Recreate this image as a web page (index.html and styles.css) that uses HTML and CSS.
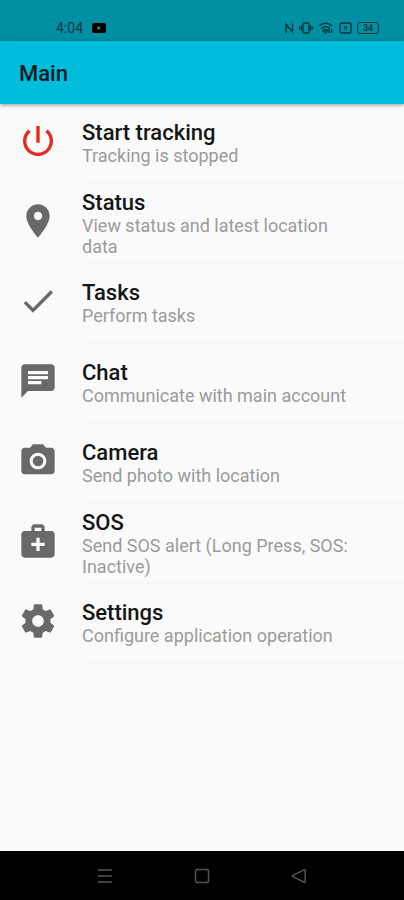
FILE: index.html
```html
<!DOCTYPE html>
<html lang="en">
<head>
    <meta charset="UTF-8">
    <meta name="viewport" content="width=device-width, initial-scale=1.0">
    <title>Main</title>
    <link rel="stylesheet" href="styles.css">
</head>
<body>
    <div class="status-bar">
        <div class="status-left">
            <span>4:04</span>
            <svg width="14" height="10" viewBox="0 0 14 10">
                <rect width="14" height="10" rx="2" fill="#000"/>
                <path d="M5.5 3v4L9 5z" fill="#4b8f8c"/>
            </svg>
        </div>
        <div class="status-right">
            <!-- NFC -->
            <svg width="9" height="12" viewBox="0 0 9 12">
                <path d="M1 11V2l6.500 8V1.500M1 3l3 3.500"/>
            </svg>
            <!-- Vibrate -->
            <svg width="14" height="12" viewBox="0 0 14 12">
                <rect x="4" y="1" width="6" height="10" rx="1"/>
                <path d="M2.500 3v6M11.500 3v6M.7 4.500v3M13.300 4.500v3"/>
            </svg>
            <!-- Wi-Fi -->
            <svg width="16" height="12" viewBox="0 0 16 12">
                <path d="M1 4c4-3.500 9-3.500 13 0M3 6.500c3-2.500 6-2.500 9 0M5 8.500c1.500-1.300 3-1.300 4.500 0L7.500 11zM11 7v4M13.500 7v4"/>
            </svg>
            <!-- SIM -->
            <svg width="13" height="12" viewBox="0 0 13 12">
                <rect x="1" y="1" width="11" height="10" rx="2"/>
                <path d="M5 4.500l3 3M8 4.500l-3 3"/>
            </svg>
            <div class="battery">34</div>
        </div>
    </div>

    <header class="app-bar">
        <h1>Main</h1>
    </header>

    <main>
        <ul class="menu">
            <li>
                <button class="menu-item">
                    <svg class="icon power" viewBox="0 0 24 24"><path d="M13 3h-2v10h2V3zm4.830 2.170l-1.420 1.420C17.990 7.860 19 9.810 19 12c0 3.870-3.130 7-7 7s-7-3.130-7-7c0-2.190 1.010-4.140 2.580-5.420L6.170 5.170C4.230 6.820 3 9.260 3 12c0 4.970 4.030 9 9 9s9-4.030 9-9c0-2.740-1.230-5.180-3.170-6.830z"/></svg>
                    <span class="text">
                        <span class="title">Start tracking</span>
                        <span class="summary">Tracking is stopped</span>
                    </span>
                </button>
            </li>
            <li>
                <button class="menu-item">
                    <svg class="icon" viewBox="0 0 24 24"><path d="M12 2C8.130 2 5 5.130 5 9c0 5.250 7 13 7 13s7-7.750 7-13c0-3.870-3.130-7-7-7zm0 9.500c-1.380 0-2.500-1.120-2.500-2.500s1.120-2.500 2.500-2.500 2.500 1.120 2.500 2.500-1.120 2.500-2.500 2.500z"/></svg>
                    <span class="text">
                        <span class="title">Status</span>
                        <span class="summary">View status and latest location data</span>
                    </span>
                </button>
            </li>
            <li>
                <button class="menu-item">
                    <svg class="icon" viewBox="0 0 24 24"><path d="M9 16.170L4.830 12l-1.420 1.410L9 19 21 7l-1.410-1.410z"/></svg>
                    <span class="text">
                        <span class="title">Tasks</span>
                        <span class="summary">Perform tasks</span>
                    </span>
                </button>
            </li>
            <li>
                <button class="menu-item">
                    <svg class="icon" viewBox="0 0 24 24"><path d="M20 2H4c-1.100 0-1.990.9-1.990 2L2 22l4-4h14c1.100 0 2-.9 2-2V4c0-1.100-.9-2-2-2zM6 9h12v2H6V9zm8 5H6v-2h8v2zm4-6H6V6h12v2z"/></svg>
                    <span class="text">
                        <span class="title">Chat</span>
                        <span class="summary">Communicate with main account</span>
                    </span>
                </button>
            </li>
            <li>
                <button class="menu-item">
                    <svg class="icon" viewBox="0 0 24 24"><circle cx="12" cy="12" r="3.200"/><path d="M9 2L7.170 4H4c-1.100 0-2 .9-2 2v12c0 1.100.9 2 2 2h16c1.100 0 2-.9 2-2V6c0-1.100-.9-2-2-2h-3.170L15 2H9zm3 15c-2.760 0-5-2.240-5-5s2.240-5 5-5 5 2.240 5 5-2.240 5-5 5z"/></svg>
                    <span class="text">
                        <span class="title">Camera</span>
                        <span class="summary">Send photo with location</span>
                    </span>
                </button>
            </li>
            <li>
                <button class="menu-item">
                    <svg class="icon" viewBox="0 0 24 24"><path d="M20 6h-4V4c0-1.100-.9-2-2-2h-4c-1.100 0-2 .9-2 2v2H4c-1.100 0-2 .9-2 2v12c0 1.100.9 2 2 2h16c1.100 0 2-.9 2-2V8c0-1.100-.9-2-2-2zM10 4h4v2h-4V4zm6 11h-3v3h-2v-3H8v-2h3v-3h2v3h3v2z"/></svg>
                    <span class="text">
                        <span class="title">SOS</span>
                        <span class="summary">Send SOS alert (Long Press, SOS: Inactive)</span>
                    </span>
                </button>
            </li>
            <li>
                <button class="menu-item">
                    <svg class="icon" viewBox="0 0 24 24"><path d="M19.430 12.980c.04-.32.07-.64.07-.98s-.03-.66-.07-.98l2.110-1.650c.19-.15.24-.42.12-.64l-2-3.460c-.12-.22-.39-.3-.61-.22l-2.490 1c-.52-.4-1.080-.73-1.690-.98l-.38-2.650C14.460 2.180 14.250 2 14 2h-4c-.25 0-.46.18-.49.42l-.38 2.650c-.61.25-1.170.59-1.690.98l-2.490-1c-.23-.09-.49 0-.61.22l-2 3.460c-.13.22-.07.49.12.64l2.110 1.650c-.04.32-.07.65-.07.98s.03.66.07.98l-2.110 1.650c-.19.15-.24.42-.12.64l2 3.460c.12.22.39.3.61.22l2.490-1c.52.4 1.080.73 1.690.98l.38 2.650c.03.24.24.42.49.42h4c.25 0 .46-.18.49-.42l.38-2.650c.61-.25 1.170-.59 1.690-.98l2.490 1c.23.09.49 0 .61-.22l2-3.460c.12-.22.07-.49-.12-.64l-2.110-1.650zM12 15.500c-1.930 0-3.500-1.570-3.500-3.500s1.570-3.500 3.500-3.500 3.500 1.570 3.500 3.500-1.570 3.500-3.500 3.500z"/></svg>
                    <span class="text">
                        <span class="title">Settings</span>
                        <span class="summary">Configure application operation</span>
                    </span>
                </button>
            </li>
        </ul>
    </main>

    <nav class="nav-bar">
        <button aria-label="Recent apps">
            <svg width="16" height="16" viewBox="0 0 16 16"><path d="M1 2h14M1 8h14M1 14h14"/></svg>
        </button>
        <button aria-label="Home">
            <svg width="16" height="16" viewBox="0 0 16 16"><rect x="1.500" y="1.500" width="13" height="13" rx="2"/></svg>
        </button>
        <button aria-label="Back">
            <svg width="16" height="16" viewBox="0 0 16 16"><path d="M13 1.800L2 7.300q-1 .7 0 1.400l11 5.500q1.200.3 1.200-1V2.800q0-1.300-1.200-1z"/></svg>
        </button>
    </nav>
</body>
</html>
```

FILE: styles.css
```css
:root {
    --status-color: #008fa3;
    --bar-color: #00bcdb;
    --bg-color: #fafafa;
    --icon-color: #696969;
    --title-color: #161616;
    --summary-color: #9b9b9b;
    --divider: #f5f5f5;
}

* {
    box-sizing: border-box;
}
body {
    margin: 0;
    min-height: 100vh;
    display: flex;
    flex-direction: column;
    background-color: var(--bg-color);
    font-family: Roboto, "Liberation Sans", sans-serif;
}
button {
    font-family: inherit;
    border: none;
    background: none;
    padding: 0;
    cursor: pointer;
}

/* Status bar */
.status-bar {
    display: flex;
    justify-content: space-between;
    align-items: center;
    height: 41px;
    padding: 14px 25px 0 56px;
    background-color: var(--status-color);
    color: #06343b;
    font-size: 14px;
}
.status-left {
    display: flex;
    align-items: center;
    gap: 9px;
}
.status-right {
    display: flex;
    align-items: center;
    gap: 5px;
}
.status-right svg {
    fill: none;
    stroke: #06343b;
    stroke-width: 1.3;
}
.battery {
    width: 22px;
    height: 12px;
    border: 1px solid #06343b;
    border-radius: 4px;
    font-size: 9px;
    font-weight: 500;
    line-height: 10px;
    text-align: center;
}

/* App bar */
.app-bar {
    display: flex;
    align-items: center;
    height: 63px;
    padding: 1px 19px 0;
    background-color: var(--bar-color);
    box-shadow: 0 1px 4px rgba(0,0,0,0.4);
}
.app-bar h1 {
    margin: 0;
    font-size: 22px;
    font-weight: 500;
    color: #04191d;
}

/* Menu */
main {
    flex: 1;
}
.menu {
    list-style: none;
    margin: 0;
    padding: 0;
}
.menu-item {
    display: flex;
    width: 100%;
    min-height: 80px;
    padding-left: 18px;
    gap: 24px;
    text-align: left;
}
.icon {
    flex: none;
    width: 40px;
    height: 40px;
    margin-top: 17px;
    fill: var(--icon-color);
}
.power {
    fill: #e8291f;
}
.text {
    flex: 1;
    align-self: stretch;
    display: flex;
    flex-direction: column;
    justify-content: center;
    padding-right: 40px;
    border-bottom: 1px solid var(--divider);
}
.title {
    font-size: 22px;
    font-weight: 500;
    line-height: 24px;
    color: var(--title-color);
}
.summary {
    font-size: 18px;
    line-height: 21px;
    color: var(--summary-color);
}

/* Navigation bar */
.nav-bar {
    display: flex;
    justify-content: center;
    align-items: center;
    gap: 81px;
    height: 49px;
    background-color: #000;
}
.nav-bar button {
    display: flex;
}
.nav-bar svg {
    fill: none;
    stroke: #555;
    stroke-width: 1.5;
}
```
